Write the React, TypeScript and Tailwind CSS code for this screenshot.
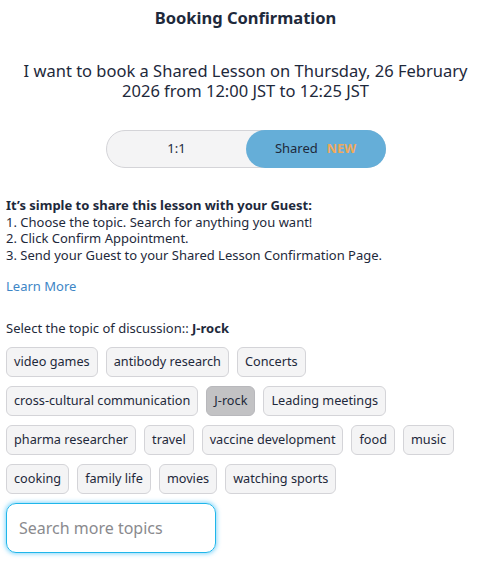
import { useState } from "react";

const topics = [
    "video games",
    "antibody research",
    "Concerts",
    "cross-cultural communication",
    "J-rock",
    "Leading meetings",
    "pharma researcher",
    "travel",
    "vaccine development",
    "food",
    "music",
    "cooking",
    "family life",
    "movies",
    "watching sports",
];

export default function App() {
    const [mode, setMode] = useState<"one" | "shared">("shared");
    const [selected, setSelected] = useState("J-rock");
    const [query, setQuery] = useState("");

    return (
        <div className="min-h-screen bg-white px-[6px] text-[#1e293b] [font-family:'Noto_Sans',sans-serif]">
            <div className="pl-[10px]">
                <h1 className="pt-[7px] text-center text-[16.5px] font-bold leading-[22px] text-[#1e293b]">
                    Booking Confirmation
                </h1>

                <p className="mt-[32px] text-center text-[16.5px] leading-[20px] text-[#1e293b]">
                    I want to book a Shared Lesson on Thursday, 26 February 2026 from 12:00 JST to 12:25 JST
                </p>

                {/* lesson type toggle */}
                <div className="mt-[29px] flex justify-center">
                    <div className="flex h-[38px] w-[280px] rounded-full border border-[#d4d4d8] bg-[#f4f4f5] text-[13px]">
                        <button
                            type="button"
                            onClick={() => setMode("one")}
                            className={
                                mode === "one"
                                    ? "-m-px flex flex-1 items-center justify-center rounded-full bg-[#65aed8] text-[#1e293b]"
                                    : "flex flex-1 items-center justify-center rounded-full text-[#1e293b]"
                            }
                        >
                            1:1
                        </button>
                        <button
                            type="button"
                            onClick={() => setMode("shared")}
                            className={
                                mode === "shared"
                                    ? "-m-px flex flex-1 items-center justify-center gap-[9px] rounded-full bg-[#65aed8] text-[#1e293b]"
                                    : "flex flex-1 items-center justify-center gap-[9px] rounded-full text-[#1e293b]"
                            }
                        >
                            Shared
                            <span className="text-[12.5px] font-bold text-[#f0a95a]">NEW</span>
                        </button>
                    </div>
                </div>
            </div>

            <div className="mt-[29px] text-[13px] leading-[16.7px] text-[#1e293b]">
                <p className="font-bold">It’s simple to share this lesson with your Guest:</p>
                <p>1. Choose the topic. Search for anything you want!</p>
                <p>2. Click Confirm Appointment.</p>
                <p>3. Send your Guest to your Shared Lesson Confirmation Page.</p>
            </div>

            <a href="#" className="mt-[14px] block text-[13px] leading-[16px] text-[#3d86c6]">
                Learn More
            </a>

            <p className="mt-[26px] text-[13px] leading-[16px] text-[#1e293b]">
                Select the topic of discussion:: <span className="font-bold">{selected}</span>
            </p>

            <div className="mt-[11px] flex flex-wrap gap-x-[8px] gap-y-[9px]">
                {topics.map((t) => (
                    <button
                        key={t}
                        type="button"
                        onClick={() => setSelected(t)}
                        className={
                            t === selected
                                ? "h-[30px] rounded-[6px] border border-[#b8b8bc] bg-[#c2c2c4] px-[7px] text-[12.7px] text-[#1e293b]"
                                : "h-[30px] rounded-[6px] border border-[#d4d4d8] bg-[#f4f4f5] px-[7px] text-[12.7px] text-[#1e293b]"
                        }
                    >
                        {t}
                    </button>
                ))}
            </div>

            <input
                autoFocus
                value={query}
                onChange={(e) => setQuery(e.target.value)}
                placeholder="Search more topics"
                className="mt-[9px] h-[50px] w-[210px] rounded-[10px] border border-[#1fb6ea] px-[12px] text-[16px] text-[#1e293b] shadow-[0_0_4px_1px_rgba(56,189,248,0.6)] outline-none placeholder:text-[#8a8a8e]"
            />
        </div>
    );
}
